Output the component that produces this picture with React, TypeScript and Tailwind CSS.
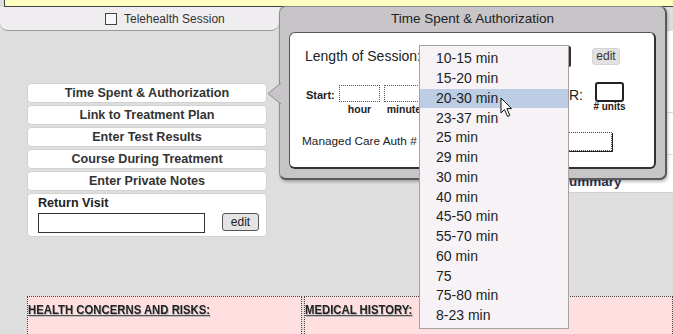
import React from "react";

const menuItems = [
  "Time Spent & Authorization",
  "Link to Treatment Plan",
  "Enter Test Results",
  "Course During Treatment",
  "Enter Private Notes",
];

const sessionLengths = [
  "10-15 min",
  "15-20 min",
  "20-30 min",
  "23-37 min",
  "25 min",
  "29 min",
  "30 min",
  "40 min",
  "45-50 min",
  "55-70 min",
  "60 min",
  "75",
  "75-80 min",
  "8-23 min",
];

const selected = "20-30 min";

function TimeSpentPopup() {
  return (
    <div className="absolute left-[279px] top-[6px] w-[388px] h-[174px] rounded-[7px] bg-[#c7c5c7] border border-[#8d8d8d] border-r-2 border-b-2 border-r-[#5a5a5a] border-b-[#5a5a5a] shadow-[1px_2px_3px_rgba(0,0,0,0.25)]">
      {/* pointer towards the active menu item */}
      <svg
        className="absolute left-[-13px] top-[76px]"
        width="14"
        height="22"
        viewBox="0 0 14 22"
      >
        <polygon points="14,0 1,10.5 14,21" fill="#c7c5c7" stroke="#8d8d8d" strokeWidth="1" />
        <rect x="13" y="1" width="2" height="19" fill="#c7c5c7" />
      </svg>

      <div className="h-[25px] flex items-center justify-center text-[13.5px] text-[#222]">
        Time Spent &amp; Authorization
      </div>

      <div className="ml-[9px] mr-[9px] h-[137px] rounded-[6px] bg-white border border-[#555] border-r-2 border-b-2 border-r-[#333] border-b-[#333]">
        {/* Length of session */}
        <div className="mt-[13px] h-[21px] flex items-center pl-[15px]">
          <span className="w-[115px] text-[14px] text-[#222] whitespace-nowrap">Length of Session:</span>
          <div className="w-[151px] h-[21px] bg-white border border-[#333] border-r-[3px] rounded-[2px]" />
          <button className="ml-[21px] w-[28px] h-[17px] rounded-[3px] bg-[#e2e2e2] border border-[#d4d4d4] text-[12px] leading-[15px] text-[#333]">
            edit
          </button>
        </div>

        {/* Start / end time or units */}
        <div className="mt-[15px] flex items-start pl-[16px] pr-[30px]">
          <span className="w-[33px] pt-[5px] text-[11px] font-bold text-[#222]">Start:</span>
          <div className="w-[41px] flex flex-col items-center">
            <div className="mt-[3px] w-full h-[17px] border border-dotted border-[#555]" />
            <span className="mt-[1px] text-[10.5px] leading-[12px] font-bold text-[#222]">hour</span>
          </div>
          <div className="ml-[4px] w-[40px] flex flex-col items-center">
            <div className="mt-[3px] w-full h-[17px] border border-dotted border-[#555]" />
            <span className="mt-[1px] text-[10.5px] leading-[12px] font-bold text-[#222]">minute</span>
          </div>
          <div className="flex-1" />
          <span className="pt-[3px] text-[14px] text-[#222]">OR:</span>
          <div className="ml-[12px] w-[29px] flex flex-col items-center">
            <div className="w-full h-[20px] rounded-[3px] border-2 border-[#222]" />
            <span className="mt-[-1px] text-[10px] leading-[12px] font-bold text-[#222] whitespace-nowrap">
              # units
            </span>
          </div>
        </div>

        {/* Managed care */}
        <div className="mt-[17px] h-[19px] flex items-center pl-[12px]">
          <span className="text-[11.8px] text-[#222] whitespace-nowrap">Managed Care Auth #</span>
          <div className="ml-auto mr-[42px] w-[150px] h-[19px] border border-dotted border-[#444] shadow-[1px_1px_0_#222]" />
        </div>
      </div>

      {/* open select list */}
      <div className="absolute left-[139px] top-[38px] w-[150px] h-[284px] bg-[#f6f2f6] border border-[#a3a3a3] pt-[3px] z-10">
        {sessionLengths.map((item) => (
          <div
            key={item}
            className={`h-[19.75px] flex items-center pl-[16px] text-[14px] text-[#1e1e1e] ${
              item === selected ? "bg-[#bdcde5]" : ""
            }`}
          >
            {item}
          </div>
        ))}
      </div>

      {/* mouse pointer */}
      <svg
        className="absolute left-[220px] top-[90px] z-20"
        width="13"
        height="21"
        viewBox="0 0 13 21"
      >
        <path
          d="M1 1 L1 16 L4.5 12.5 L7.5 19.5 L9.8 18.5 L6.9 11.6 L11.5 11.6 Z"
          fill="#fff"
          stroke="#111"
          strokeWidth="1"
          strokeLinejoin="round"
        />
      </svg>
    </div>
  );
}

export default function App() {
  return (
    <div className="relative w-[673px] h-[334px] overflow-hidden bg-[#dedede] font-['Liberation_Sans',Arial,sans-serif]">
      {/* yellow header strip */}
      <div className="ml-[4px] h-[7px] bg-[#ffffc2] border-l border-b border-[#444]" />

      {/* telehealth */}
      <div className="w-[279px] h-[24px] flex items-center bg-[#f0edf0] border-b border-[#9a9a9a] rounded-b-[8px]">
        <div className="ml-[105px] w-[12px] h-[12px] border border-[#444] bg-[#f7f7f7]" />
        <span className="ml-[7px] text-[12px] text-[#333]">Telehealth Session</span>
      </div>

      <div className="flex items-start">
        {/* left menu */}
        <div className="ml-[27px] w-[240px] pt-[52px]">
          {menuItems.map((label) => (
            <div
              key={label}
              className="mb-[2px] h-[20px] flex items-center justify-center rounded-[4px] bg-white border border-[#d2d2d2] text-[12.6px] font-bold text-[#333] whitespace-nowrap"
            >
              {label}
            </div>
          ))}
          <div className="h-[44px] rounded-[4px] bg-white border border-[#d2d2d2] pl-[10px]">
            <div className="pt-[2px] text-[12.6px] leading-[15px] font-bold text-[#222]">Return Visit</div>
            <div className="mt-[2px] flex items-start">
              <div className="w-[167px] h-[20px] border border-[#333] bg-white" />
              <button className="ml-[17px] w-[37px] h-[18px] rounded-[3px] bg-[#e4e4e4] border border-[#555] text-[12px] leading-[16px] text-[#222]">
                edit
              </button>
            </div>
          </div>
        </div>

        {/* summary panel, mostly hidden behind the popup */}
        <div className="ml-auto w-[233px] h-[162px] bg-white border-l border-b border-[#cfcfcf] flex flex-col">
          <div className="h-[82px] border-b border-[#dcdcdc]" />
          <div className="h-[42px] border-b border-[#dcdcdc]" />
          <div className="pt-[19px] pl-[87px] text-[13.5px] leading-[16px] font-bold text-[#2b3350]">Visit Summary</div>
        </div>
      </div>

      {/* lower sections */}
      <div className="mt-[59px] ml-[27px] grid grid-cols-[275px_1fr] gap-[2px]">
        {["HEALTH CONCERNS AND RISKS:", "MEDICAL HISTORY:"].map((title) => (
          <div key={title} className="h-[60px] bg-[#ffdfdf] border border-dotted border-[#444]">
            <span className="inline-block origin-left scale-x-[0.84] whitespace-nowrap pt-[3px] text-[13.5px] leading-[15px] font-bold text-[#222] underline decoration-[#555] [text-shadow:1px_1px_0_#bbb]">
              {title}
            </span>
          </div>
        ))}
      </div>

      <TimeSpentPopup />
    </div>
  );
}
